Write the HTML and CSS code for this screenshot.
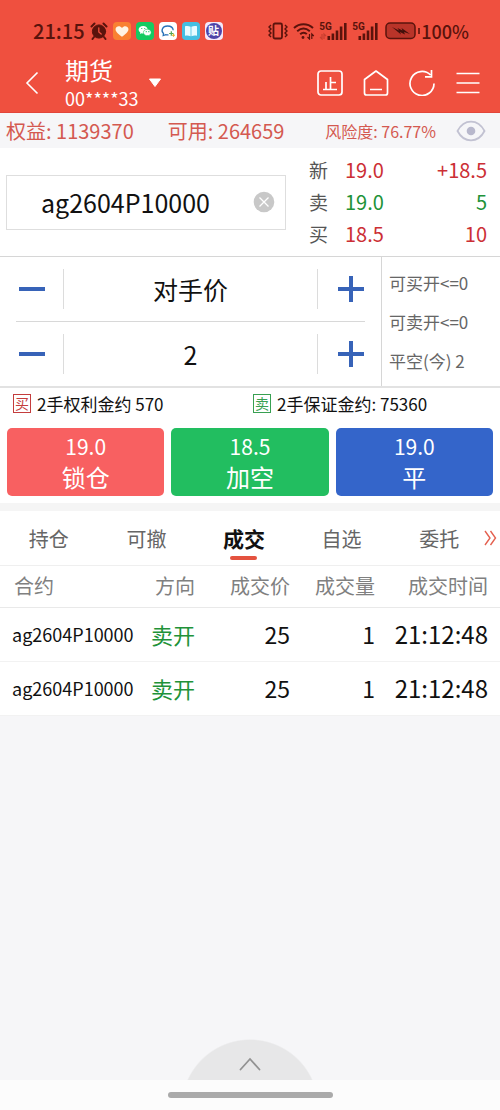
FILE: index.html
```html
<!DOCTYPE html>
<html lang="zh-CN">
<head>
<meta charset="utf-8">
<meta name="viewport" content="width=device-width, initial-scale=1">
<title>期货</title>
<link rel="stylesheet" href="styles.css">
</head>
<body>
<div class="app">
  <header class="top">
    <div class="status">
      <div class="status-left">
        <span class="clock">21:15</span>
        <svg width="18" height="18" viewBox="0 0 18 18" fill="#5a130c" stroke="#5a130c" stroke-linecap="round"><circle cx="9" cy="9.500" r="6.600"/><path d="M1.500 4.500 4.500 1.500M16.500 4.500 13.500 1.500M4 15l-1.500 2M14 15l1.500 2" stroke-width="2"/><path d="M8.800 6v4l2.400 2" fill="none" stroke="#ef503f" stroke-width="1.300"/></svg>
        <svg width="18" height="18" viewBox="0 0 18 18"><rect width="18" height="18" rx="4" fill="#f98132"/><path d="M9 14.800C4 11.300 2.300 9 2.600 6.800 3 4 7 3.300 9 6c2-2.700 6-2 6.400.8C15.700 9 14 11.300 9 14.800Z" fill="#fff4e4"/></svg>
        <svg width="18" height="18" viewBox="0 0 18 18"><rect width="18" height="18" rx="4" fill="#14cb62"/><path d="M7.200 4C4.600 4 2.600 5.500 2.600 7.600c0 1.200.7 2.200 1.700 2.900L4 12l1.700-.8c2.900.7 6-.7 6-3.600C11.700 5.500 9.700 4 7.200 4Z" fill="#fff"/><path d="M11.500 7.200c-2.300 0-4.100 1.400-4.100 3.300 0 2.300 2.500 3.600 5 3l1.500.8-.4-1.300c1-.6 1.700-1.500 1.700-2.500 0-1.900-1.600-3.300-3.700-3.300Z" fill="#fff" stroke="#14cb62" stroke-width=".6"/><path d="M5.700 6.500h.1M8.700 6.500h.1M10.200 9.700h.1M12.800 9.700h.1" stroke="#14cb62" stroke-width="1.200" stroke-linecap="round"/></svg>
        <svg width="18" height="18" viewBox="0 0 18 18"><rect width="18" height="18" rx="4" fill="#fff"/><path d="M9.500 12.800c-1 .2-1.800.2-2.700-.1l-2.600.9.300-2C1.600 9 3.300 4 8.500 4c3.500 0 5.500 1.800 5.700 4.200" fill="none" stroke="#2872b8" stroke-width="1.300"/><path d="M12.300 9.300v4.400M10.100 11.500h4.400" stroke="#56a553" stroke-width="1.200"/><path d="M14.500 11.800v3M13 13.300h3" stroke="#e8b432" stroke-width="1.100"/></svg>
        <svg width="18" height="18" viewBox="0 0 18 18"><rect width="18" height="18" rx="4" fill="#45bfe2"/><path d="M3 4.200c2-.5 4-.3 5.600.5v9.500c-1.600-.7-3.600-.9-5.600-.5ZM9.400 4.700c1.600-.8 3.600-1 5.600-.5v9.500c-2-.4-4-.2-5.600.5Z" fill="#e9fbff"/></svg>
        <span class="app-badge"><span class="app-badge-disc">贴</span></span>
      </div>
      <div class="status-right">
        <svg width="22" height="18" viewBox="0 0 22 18" fill="none" stroke="#5a130c" stroke-width="1.800"><rect x="6.500" y="1.500" width="8.500" height="15" rx="1.500"/><path d="M4 3 2 5l2 2-2 2 2 2-2 2 2 2M18 3l2 2-2 2 2 2-2 2 2 2-2 2" stroke-width="1.400"/></svg>
        <svg width="22" height="18" viewBox="0 0 22 18" fill="none" stroke="#5a130c" stroke-width="2"><path d="M1 6c5.500-5 13.500-5 19 0M4.200 9.200c4-3.500 8.600-3.500 12.600 0M7.200 12.200c2-2 4.800-2 6.600 0"/><circle cx="10" cy="15.500" r="1.400" fill="#5a130c" stroke="none"/><path d="M16.500 12v5l-2-2M18.800 17v-5l2 2" stroke-width="1.200"/></svg>
        <span class="signal"><span class="gen">5G</span><svg width="28" height="18" viewBox="0 0 28 18" fill="#5a130c"><path d="M8.500 14h2.600v4H8.500ZM12.600 11.500h2.600V18h-2.600ZM16.700 8.500h2.600V18h-2.600ZM20.800 4.500h2.600V18h-2.600ZM25 1h2.600v17H25Z"/><path d="M3 12v5l-2-2M5 17v-5l2 2" fill="none" stroke="#c83f30" stroke-width="1.200"/></svg></span>
        <span class="signal signal-second"><span class="gen">5G</span><svg width="26" height="18" viewBox="0 0 26 18" fill="#5a130c"><path d="M6.500 14h2.600v4H6.500ZM10.600 11.500h2.600V18h-2.600ZM14.700 8.500h2.600V18h-2.600ZM18.800 4.500h2.600V18h-2.600ZM23 1h2.600v17H23Z"/></svg></span>
        <svg class="battery" width="36" height="18" viewBox="0 0 36 18"><rect x="1" y="1" width="29" height="15.500" rx="4" fill="#b93429" stroke="#5a130c" stroke-width="1.500"/><path d="M34 6v6" stroke="#5a130c" stroke-width="1.600"/><path d="m7 5 7 3.500L12.500 6l5 2.500L16.500 6 25 12l-6-2 1 2.500-5-2.500 1 2.500Z" fill="#42100b"/></svg>
        <span class="charge">100%</span>
      </div>
    </div>
    <div class="nav">
      <button class="icon-btn back" aria-label="返回"><svg width="14" height="24" viewBox="0 0 14 24" fill="none" stroke="#fff" stroke-width="1.600"><path d="M12.500 1.500 2 12l10.500 10.500"/></svg></button>
      <button class="account">
        <span class="account-text"><span class="account-title">期货</span><span class="account-id">00****33</span></span>
        <svg width="14" height="10" viewBox="0 0 14 10"><path d="M1.500 1h11L7 8.500Z" fill="#fff" stroke="#fff" stroke-linejoin="round"/></svg>
      </button>
      <div class="nav-actions">
        <button class="icon-btn" aria-label="止损"><svg width="26" height="26" viewBox="0 0 26 26" fill="none" stroke="#fff" stroke-width="1.700"><rect x="1" y="1" width="24" height="24" rx="3"/><path d="M6 19.500h14M13.500 7v12.500M9 12v7.500M13.500 12.500h5.500"/></svg></button>
        <button class="icon-btn" aria-label="首页"><svg width="26" height="26" viewBox="0 0 26 26" fill="none" stroke="#fff" stroke-width="1.700" stroke-linejoin="round"><path d="M1.500 9.500 13 1l11.500 8.500V23a2 2 0 0 1-2 2h-19a2 2 0 0 1-2-2ZM7 19.500h12"/></svg></button>
        <button class="icon-btn" aria-label="刷新"><svg width="26" height="26" viewBox="0 0 26 26" fill="none" stroke="#fff" stroke-width="1.700"><path d="M25 13.500A12 12 0 1 1 21.500 5M22.500 0v6.800H16"/></svg></button>
        <button class="icon-btn" aria-label="菜单"><svg width="26" height="26" viewBox="0 0 26 26" fill="none" stroke="#fff" stroke-width="1.700"><path d="M1.500 3.500h23M1.500 13h23M1.500 22.500h23"/></svg></button>
      </div>
    </div>
  </header>

  <section class="funds">
    <span class="equity">权益: 1139370</span>
    <span class="available">可用: 264659</span>
    <span class="risk">风险度: 76.77%</span>
    <button class="icon-btn" aria-label="隐藏金额"><svg width="30" height="22" viewBox="0 0 30 22"><path d="M1.500 11C8-1.500 22-1.500 28.500 11 22 23.500 8 23.500 1.500 11Z" fill="none" stroke="#c2c2d2" stroke-width="1.800"/><circle cx="15" cy="11" r="4.300" fill="#b8b8cc"/></svg></button>
  </section>

  <section class="quote">
    <div class="contract-box">
      <input class="contract-input" type="text" aria-label="合约" value="ag2604P10000">
      <button class="icon-btn" aria-label="清除"><svg width="22" height="22" viewBox="0 0 22 22"><circle cx="11" cy="11" r="10.300" fill="#c8c8c8"/><path d="m6.500 6.500 9 9m0-9-9 9" stroke="#fff" stroke-width="1.300"/></svg></button>
    </div>
    <div class="prices">
      <span class="label">新</span><span class="up">19.0</span><span class="up amount">+18.5</span>
      <span class="label">卖</span><span class="down">19.0</span><span class="down amount">5</span>
      <span class="label">买</span><span class="up">18.5</span><span class="up amount">10</span>
    </div>
  </section>

  <section class="order">
    <div class="steppers">
      <div class="stepper">
        <button class="step" aria-label="降低价格"><svg width="26" height="26" viewBox="0 0 26 26"><path d="M0 13h26" stroke="#3763b8" stroke-width="4"/></svg></button>
        <input class="step-value" type="text" aria-label="价格" value="对手价">
        <button class="step" aria-label="提高价格"><svg width="26" height="26" viewBox="0 0 26 26"><path d="M0 13h26M13 0v26" stroke="#3763b8" stroke-width="4"/></svg></button>
      </div>
      <div class="stepper">
        <button class="step" aria-label="减少手数"><svg width="26" height="26" viewBox="0 0 26 26"><path d="M0 13h26" stroke="#3763b8" stroke-width="4"/></svg></button>
        <input class="step-value" type="text" aria-label="手数" value="2">
        <button class="step" aria-label="增加手数"><svg width="26" height="26" viewBox="0 0 26 26"><path d="M0 13h26M13 0v26" stroke="#3763b8" stroke-width="4"/></svg></button>
      </div>
    </div>
    <div class="limits"><span>可买开&lt;=0</span><span>可卖开&lt;=0</span><span>平空(今) 2</span></div>
  </section>

  <section class="margin">
    <div class="margin-item"><span class="tag tag-buy">买</span><span>2手权利金约 570</span></div>
    <div class="margin-item"><span class="tag tag-sell">卖</span><span>2手保证金约: 75360</span></div>
  </section>

  <section class="trade">
    <button class="trade-btn lock"><span class="trade-price">19.0</span><span class="trade-name">锁仓</span></button>
    <button class="trade-btn add"><span class="trade-price">18.5</span><span class="trade-name">加空</span></button>
    <button class="trade-btn close"><span class="trade-price">19.0</span><span class="trade-name">平</span></button>
  </section>

  <nav class="tabs">
    <button class="tab">持仓</button>
    <button class="tab">可撤</button>
    <button class="tab active">成交</button>
    <button class="tab">自选</button>
    <button class="tab">委托</button>
    <button class="icon-btn more" aria-label="更多"><svg width="13" height="16" viewBox="0 0 13 16" fill="none" stroke="#e4604f" stroke-width="1.400"><path d="m1 1 5 7-5 7M6.500 1l5 7-5 7"/></svg></button>
  </nav>

  <table class="deals">
    <thead><tr><th class="col-contract">合约</th><th class="col-side">方向</th><th class="col-price">成交价</th><th class="col-volume">成交量</th><th class="col-time">成交时间</th></tr></thead>
    <tbody>
      <tr><td class="contract">ag2604P10000</td><td class="side">卖开</td><td>25</td><td>1</td><td>21:12:48</td></tr>
      <tr><td class="contract">ag2604P10000</td><td class="side">卖开</td><td>25</td><td>1</td><td>21:12:48</td></tr>
    </tbody>
  </table>

  <footer class="bottom">
    <button class="drawer" aria-label="展开"><svg width="22" height="14" viewBox="0 0 22 14" fill="none" stroke="#929292" stroke-width="1.800" stroke-linecap="round"><path d="M1.500 12.500 11 2l9.500 10.500"/></svg></button>
    <div class="home-area"><div class="home-bar"></div></div>
  </footer>
</div>
</body>
</html>
```
FILE: styles.css
```css
* { box-sizing: border-box; }
body {
  margin: 0;
  font-family: "Noto Sans CJK SC", sans-serif;
  color: #111;
  background: #f6f6f8;
}
button, input { font: inherit; color: inherit; border: 0; padding: 0; margin: 0; background: none; border-radius: 0; }
svg { display: block; flex: none; }
.app { min-height: 100vh; display: flex; flex-direction: column; }
.icon-btn { display: flex; align-items: center; justify-content: center; }

.top { background: #ef503f; padding-top: 18px; border-bottom: 1px solid #e2453a; }
.status { display: flex; justify-content: space-between; align-items: center; height: 26px; padding: 0 31px 0 33px; color: #5a130c; }
.status-left { display: flex; align-items: center; gap: 5px; }
.clock, .charge { font-weight: 500; line-height: 26px; }
.clock { font-size: 20px; }
.app-badge { display: flex; align-items: center; justify-content: center; width: 18px; height: 18px; border-radius: 4px; background: #f4e8fa; }
.app-badge-disc { width: 16px; height: 16px; border-radius: 8px; background: #4d43a8; color: #fff; font-size: 11px; font-weight: 700; line-height: 15px; text-align: center; }
.status-right { display: flex; align-items: center; gap: 4px; }
.signal { position: relative; }
.signal-second { margin-left: 1px; }
.gen { position: absolute; left: 0; top: 0; font-family: Roboto, sans-serif; font-size: 10px; font-weight: 700; line-height: 9px; }
.battery { margin-left: 3px; }
.charge { margin-left: -4px; font-size: 18px; }
.nav { display: flex; align-items: center; height: 68px; padding: 9px 19px 0 25px; }
.account { display: flex; align-items: center; gap: 9px; margin-left: 26px; color: #fff; text-align: left; }
.account-text { display: flex; flex-direction: column; }
.account-title { font-size: 24px; line-height: 30px; }
.account-id { font-size: 18px; line-height: 26px; }
.nav-actions { display: flex; gap: 20px; margin-left: auto; }

.funds { display: flex; align-items: center; height: 35px; padding: 0 14px 0 6px; font-size: 20px; color: #d45950; white-space: nowrap; }
.available { margin-left: 34px; }
.risk { margin-left: auto; margin-right: 20px; font-size: 16px; }

.quote { display: flex; align-items: center; height: 108px; padding: 0 13px 0 6px; background: #fff; }
.contract-box { display: flex; align-items: center; flex: 1; min-width: 0; height: 55px; padding: 0 10px 0 34px; border: 1px solid #dedede; }
.contract-input { flex: 1; min-width: 0; height: 40px; font-size: 25px; }
.prices { display: grid; grid-template-columns: 36px 60px 82px; row-gap: 4px; margin-left: 23px; font-size: 20px; line-height: 28px; }
.label { font-size: 19px; color: #555; }
.up { color: #cc2f35; }
.down { color: #219238; }
.amount { text-align: right; }

.order { display: flex; background: #fff; border-top: 1px solid #d6d6d6; border-bottom: 2px solid #e2e2e2; }
.steppers { flex: 1; min-width: 0; padding: 0 16px; }
.stepper { display: flex; align-items: center; height: 64px; }
.stepper + .stepper { height: 65px; border-top: 1px solid #d8d8d8; }
.step { display: flex; align-items: center; height: 40px; width: 47px; padding: 0 0 0 3px; }
.step:last-child { padding-left: 20px; }
.step-value { flex: 1; min-width: 0; height: 40px; border: solid #dcdcdc; border-width: 0 1px; font-size: 25px; text-align: center; }
.limits { display: flex; flex-direction: column; justify-content: center; width: 119px; padding-left: 7px; gap: 15px; border-left: 1px solid #d6d6d6; font-size: 17px; line-height: 24px; color: #666; white-space: nowrap; }

.margin { display: flex; height: 31px; padding-left: 13px; background: #fff; font-size: 17px; }
.margin-item { display: flex; align-items: center; gap: 6px; width: 240px; white-space: nowrap; }
.tag { width: 18px; height: 19px; border: 1px solid; font-size: 14px; line-height: 17px; text-align: center; }
.tag-buy { color: #c43d3d; }
.tag-sell { color: #38a052; }

.trade { display: flex; gap: 7px; padding: 9px 7px 7px; background: #fff; border-bottom: 8px solid #f5f5f5; }
.trade-btn { flex: 1; display: flex; flex-direction: column; align-items: center; padding: 3px 0; border-radius: 5px; color: #fff; }
.lock { background: #f86061; }
.add { background: #22be60; }
.close { background: #3465ca; }
.trade-price { font-size: 21px; line-height: 30px; }
.trade-name { font-size: 24px; line-height: 32px; }

.tabs { display: flex; align-items: stretch; height: 55px; padding-right: 3px; background: #fff; border-bottom: 1px solid #efefef; }
.tab { position: relative; flex: 1; font-size: 20px; color: #666; }
.active { font-size: 21px; font-weight: 700; color: #111; }
.active::after { content: ""; position: absolute; left: 50%; bottom: 5px; width: 27px; height: 4px; margin-left: -14px; border-radius: 2px; background: #e4523f; }
.more { width: 13px; margin-left: -4px; }

.deals { width: 100%; table-layout: fixed; border-collapse: collapse; background: #fff; text-align: right; white-space: nowrap; }
.deals th { height: 41px; padding: 0; border-bottom: 1px solid #e9e9e9; font-size: 20px; line-height: 28px; font-weight: 400; color: #808080; }
.deals td { height: 54px; padding: 0; border-bottom: 1px solid #f2f2f2; font-size: 23px; line-height: 32px; }
.deals th:last-child, .deals td:last-child { padding-right: 12px; }
.deals td:last-child { font-size: 24px; }
.deals .col-contract { width: 27%; padding-left: 14px; text-align: left; }
.col-side { width: 12%; }
.col-price { width: 19%; }
.col-volume { width: 17%; }
.deals .contract { padding-left: 12px; font-size: 18px; text-align: left; }
.deals .side { font-size: 22px; color: #219238; }

.bottom { display: flex; flex-direction: column; align-items: center; margin-top: auto; }
.drawer { width: 138px; height: 41px; padding: 18px 58px 9px; background: radial-gradient(circle 69px at 50% 69px, #e7e7e8 98%, transparent 100%); }
.home-area { display: flex; justify-content: center; align-items: center; width: 100%; height: 30px; background: #fcfcfc; }
.home-bar { width: 33%; height: 6px; border-radius: 3px; background: #aaa; }
```
